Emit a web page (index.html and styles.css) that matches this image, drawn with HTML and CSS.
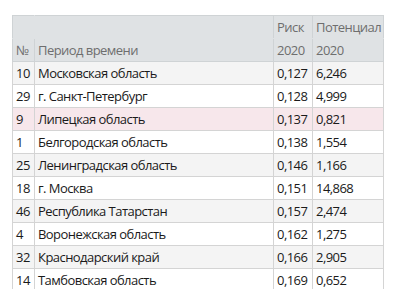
FILE: index.html
```html
<!DOCTYPE html>
<html lang="ru">
<head>
<meta charset="utf-8">
<link rel="stylesheet" href="styles.css">
</head>
<body>
<div class="page">
<table class="grid">
  <colgroup>
    <col class="c-num"><col class="c-name"><col class="c-risk"><col class="c-pot">
  </colgroup>
  <thead>
    <tr class="h1"><th></th><th></th><th>Риск</th><th>Потенциал</th></tr>
    <tr class="h2"><th>№</th><th>Период времени</th><th>2020</th><th>2020</th></tr>
  </thead>
  <tbody>
    <tr class="odd"><td>10</td><td>Московская область</td><td>0,127</td><td>6,246</td></tr>
    <tr><td>29</td><td>г. Санкт-Петербург</td><td>0,128</td><td>4,999</td></tr>
    <tr class="hl"><td>9</td><td>Липецкая область</td><td>0,137</td><td>0,821</td></tr>
    <tr><td>1</td><td>Белгородская область</td><td>0,138</td><td>1,554</td></tr>
    <tr class="odd"><td>25</td><td>Ленинградская область</td><td>0,146</td><td>1,166</td></tr>
    <tr><td>18</td><td>г. Москва</td><td>0,151</td><td>14,868</td></tr>
    <tr class="odd"><td>46</td><td>Республика Татарстан</td><td>0,157</td><td>2,474</td></tr>
    <tr><td>4</td><td>Воронежская область</td><td>0,162</td><td>1,275</td></tr>
    <tr class="odd"><td>32</td><td>Краснодарский край</td><td>0,166</td><td>2,905</td></tr>
    <tr><td>14</td><td>Тамбовская область</td><td>0,169</td><td>0,652</td></tr>
  </tbody>
</table>
</div>
</body>
</html>
```
FILE: styles.css
```css
html, body {
  margin: 0;
  padding: 0;
  background: #ffffff;
}
.page {
  padding: 15px 0 0 12px;
}
.grid {
  border-collapse: collapse;
  table-layout: fixed;
  width: 371px;
  font-family: "Open Sans", sans-serif;
  font-size: 13px;
  letter-spacing: -0.55px;
  color: #1a1a1a;
}
.c-num { width: 22px; }
.c-name { width: 239px; }
.c-risk { width: 39px; }
.c-pot { width: 71px; }
.grid th, .grid td {
  height: 22px;
  padding: 0 0 0 3px;
  text-align: left;
  white-space: nowrap;
  overflow: hidden;
  border: 1px solid #d4d4d4;
  line-height: 22px;
}
.grid th {
  background: #dfe2e4;
  color: #6e6e6e;
  font-weight: normal;
  border-color: #cfd3d5;
}
.grid .h1 th {
  border-bottom-color: #dfe2e4;
}
.grid .h1 th:first-child {
  border-right-color: #dfe2e4;
}
.grid .h1 th:nth-child(2) {
  border-left-color: #dfe2e4;
}
.grid tbody tr { background: #ffffff; }
.grid tbody tr.odd { background: #f4f4f4; }
.grid tbody tr.hl { background: #f7e7eb; }
```
